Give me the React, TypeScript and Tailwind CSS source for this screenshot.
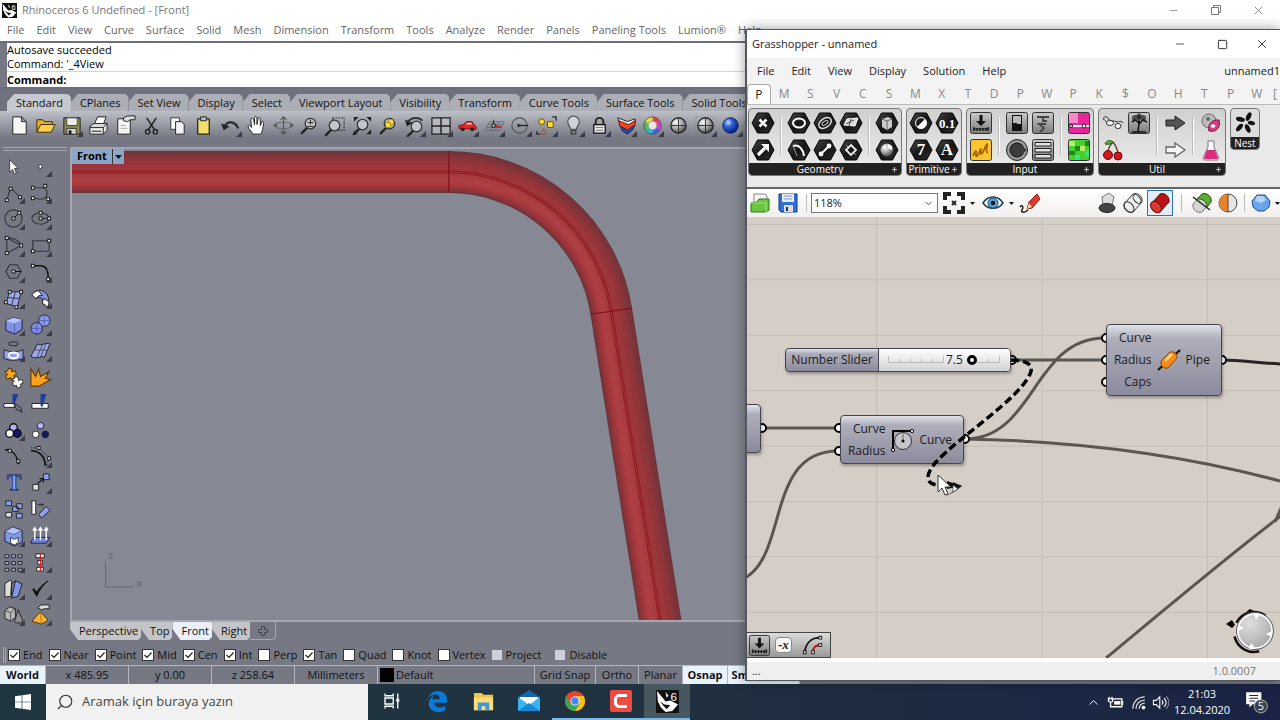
import { ReactNode } from 'react'
import clsx from 'clsx'
import { ChevronDown, ChevronUp, Minus, Plus, Search, Square, X } from 'lucide-react'

interface Tool {
  name: string
  art: ReactNode
  more?: boolean
}

interface IconProps {
  children: ReactNode
  size?: number
}

function Icon({ children, size = 24 }: IconProps) {
  return (
    <svg width={size} height={size} viewBox="0 0 24 24" fill="none" className="shrink-0" aria-hidden="true">
      {children}
    </svg>
  )
}

// Small square grip used on curve icons
function Dot({ x, y }: { x: number; y: number }) {
  return <rect x={x - 1.5} y={y - 1.5} width="3" height="3" fill="#fff" stroke="#111" strokeWidth="1" />
}

function Sphere() {
  return (
    <>
      <circle cx="12" cy="12" r="8" fill="url(#greyBall)" stroke="#1c1c1c" strokeWidth="1.2" />
      <path d="M12 4v16M4 12h16" stroke="#333" strokeWidth="1" />
    </>
  )
}

function Lens({ x = 13, y = 10 }: { x?: number; y?: number }) {
  return (
    <>
      <path d={`M${x - 4} ${y + 5}L${x - 9} ${y + 10}`} stroke="#222" strokeWidth="2.4" strokeLinecap="round" />
      <circle cx={x} cy={y} r="5.5" fill="#c3c5ca" stroke="#333" strokeWidth="1.3" />
    </>
  )
}

const standardTools: Tool[] = [
  { name: 'New', art: <path d="M5 3h9l5 5v13H5z M14 3v5h5" fill="#f6f6f6" stroke="#222" /> },
  {
    name: 'Open',
    art: (
      <>
        <path d="M3 19V6h6l2 2h8v3" fill="#e9b21d" stroke="#3a2b05" />
        <path d="M3 19l4-8h15l-4 8z" fill="#fccf4b" stroke="#3a2b05" />
      </>
    ),
  },
  {
    name: 'Save',
    more: true,
    art: (
      <>
        <path d="M4 4h17v17H4z" fill="#8c8a4d" stroke="#222" />
        <path d="M7 4h11v8H7z" fill="#eceded" stroke="#444" />
        <path d="M7 15h10v6H7z" fill="#d5d5cc" stroke="#333" />
        <path d="M9 17h3v4H9z" fill="#222" />
      </>
    ),
  },
  {
    name: 'Print',
    art: (
      <>
        <path d="M8 10l3-7h9l-3 8z" fill="#fff" stroke="#222" />
        <path d="M3 13l4-3h14v7l-4 4H3z" fill="#e2e2e2" stroke="#222" />
        <path d="M3 14h14l4-4M17 14v7M5 18h10" stroke="#222" />
      </>
    ),
  },
  {
    name: 'Properties',
    art: (
      <>
        <path d="M5 5h13v16H5z" fill="#f4f4f4" stroke="#222" />
        <path d="M8 12h5M8 15h7" stroke="#aaa" />
        <path d="M11 4l4-2h8v4h-5l-3 2-4-1z" fill="#ddd" stroke="#222" />
      </>
    ),
  },
  {
    name: 'Cut',
    art: (
      <>
        <path d="M7 4l8 12M17 4L9 16" stroke="#222" strokeWidth="1.6" />
        <circle cx="8" cy="18.500" r="2.300" stroke="#222" strokeWidth="1.4" />
        <circle cx="16" cy="18.500" r="2.300" stroke="#222" strokeWidth="1.4" />
      </>
    ),
  },
  {
    name: 'Copy',
    art: (
      <>
        <path d="M5 4h9v12H5z" fill="#fff" stroke="#333" />
        <path d="M10 8h6l3 3v10h-9z" fill="#f4f4f4" stroke="#222" />
      </>
    ),
  },
  {
    name: 'Paste',
    art: (
      <>
        <path d="M6 5h12v16H6z" fill="#f3dd6b" stroke="#222" strokeWidth="1.3" />
        <path d="M9 3h6v4H9z" fill="#bbb" stroke="#222" />
      </>
    ),
  },
  {
    name: 'Undo',
    more: true,
    art: (
      <>
        <path d="M6 13c3-6 11-6 14 2" stroke="#333" strokeWidth="2.6" />
        <path d="M2 10l3 7 6-4z" fill="#222" />
      </>
    ),
  },
  {
    name: 'Pan',
    art: (
      <path
        d="M8 21c-1-3-4-5-5-8 1-2 3 0 4 1L6 6c0-2 2-2 3 0l1 5V4c0-2 2-2 2.500 0v7l1-6c.5-2 2.500-1 2.500 0v7l1.500-4c1-1 2 0 2 1-1 6-1 9-3 12z"
        fill="#fff"
        stroke="#222"
      />
    ),
  },
  {
    name: 'Rotate view',
    art: (
      <>
        <ellipse cx="12" cy="12" rx="9" ry="3.500" stroke="#666" strokeWidth="1" />
        <path d="M12 3v18M9 6l3-3 3 3M9 18l3 3 3-3" stroke="#555" strokeWidth="1.2" />
        <path d="M1 12l4-3v5zM23 12l-4-3v5z" fill="#555" />
      </>
    ),
  },
  { name: 'Zoom', art: <><Lens /><path d="M10 9h6M13 6v5M10 13h6" stroke="#222" /></> },
  {
    name: 'Zoom window',
    art: <><path d="M9 4h12v13H9z" stroke="#333" strokeDasharray="1.500 1.500" strokeWidth="1.3" /><Lens x={11} y={12} /></>,
  },
  {
    name: 'Zoom extents',
    art: <><Lens x={12} y={11} /><path d="M3 8V3h5zM16 3h5v5zM21 16v5h-5zM3 21v-4l4 4z" fill="#222" /></>,
  },
  {
    name: 'Zoom selected',
    art: (
      <>
        <Lens />
        <circle cx="14.500" cy="8.500" r="3" fill="#fbe33a" stroke="#7d6b00" strokeWidth=".7" />
        <path d="M9 9h5v5H9z" fill="#fbe33a" stroke="#7d6b00" strokeWidth=".7" />
      </>
    ),
  },
  {
    name: 'Undo view',
    more: true,
    art: <><Lens x={13} y={13} /><path d="M4 8c4-5 12-5 15-1" stroke="#333" strokeWidth="2.200" /><path d="M1 6l2 7 6-4z" fill="#222" /></>,
  },
  {
    name: 'Four views',
    more: true,
    art: <><path d="M2 4h19v17H2z" fill="#c9cbd0" fillOpacity=".6" stroke="#222" strokeWidth="1.3" /><path d="M11.500 4v17M2 12.500h19" stroke="#222" strokeWidth="1.5" /></>,
  },
  {
    name: 'Set view',
    more: true,
    art: (
      <>
        <path d="M3 15v-3l5-1 3-3h6l2 4 2 1v3z" fill="#de2626" stroke="#8a1010" />
        <path d="M10 11l2-2h4l1 2z" fill="#f6d5d5" />
        <circle cx="7" cy="16" r="2" fill="#222" />
        <circle cx="17" cy="16" r="2" fill="#222" />
      </>
    ),
  },
  {
    name: 'Set CPlane',
    more: true,
    art: (
      <>
        <path d="M7 8h15l-4 9H2zM5 11h16M3.500 14h16M12 8l-4 9M17 8l-4 9" stroke="#666a73" strokeWidth=".9" />
        <path d="M11 12l8 2" stroke="#c00" strokeWidth="1.2" />
        <path d="M11 12V6" stroke="#333" />
        <Dot x={11} y={12} />
      </>
    ),
  },
  {
    name: 'Object snap',
    more: true,
    art: <><circle cx="11" cy="12" r="8" stroke="#555" strokeWidth="1.2" /><path d="M11 12h9" stroke="#222" strokeWidth="1.4" /><path d="M9 10v4l4-2z" fill="#222" /></>,
  },
  {
    name: 'Select',
    more: true,
    art: (
      <>
        <circle cx="7" cy="8" r="3" fill="#ffdc2c" stroke="#5e5000" />
        <path d="M13 8h6v6h-6z" fill="#ffdc2c" stroke="#5e5000" />
        <path d="M9 15l3 6H6z" stroke="#a05030" />
        <path d="M18 3h4v4M2 18v3h3" stroke="#222" strokeWidth="1.3" />
      </>
    ),
  },
  {
    name: 'Lights',
    more: true,
    art: (
      <>
        <path d="M9 16c0-3-3-4-3-8a6 6 0 0112 0c0 4-3 5-3 8z" fill="#d0d2d7" stroke="#444" strokeWidth="1.1" />
        <path d="M9.500 17h5v4h-5z" fill="#777" stroke="#333" />
      </>
    ),
  },
  {
    name: 'Lock',
    more: true,
    art: <><path d="M8 12V8a4 4 0 018 0v4" stroke="#222" strokeWidth="2" /><path d="M6 11h12v9H6z" fill="#e5e5e5" stroke="#111" strokeWidth="1.3" /><path d="M8 14h8M8 17h8" stroke="#777" /></>,
  },
  {
    name: 'Layers',
    more: true,
    art: (
      <>
        <path d="M3 4l10 4 8-3v4l-7 5-9-3z" fill="#fff" stroke="#222" />
        <path d="M4 7l10 4 7-4v5l-8 5-8-4z" fill="#f0441f" stroke="#7a1206" />
        <path d="M6 13l7 4 7-5-1 4-6 5-6-4z" fill="#2b4fa8" stroke="#13275c" />
      </>
    ),
  },
  {
    name: 'Color',
    more: true,
    art: (
      <g strokeWidth="4">
        <path d="M12 5a7 7 0 016 3.500" stroke="#e8403c" />
        <path d="M18 8.500a7 7 0 010 7" stroke="#e23ad0" />
        <path d="M18 15.500a7 7 0 01-6 3.500" stroke="#4a5be8" />
        <path d="M12 19a7 7 0 01-6-3.500" stroke="#27bcd6" />
        <path d="M6 15.500a7 7 0 010-7" stroke="#50c840" />
        <path d="M6 8.500a7 7 0 016-3.500" stroke="#eee03a" />
        <circle cx="12" cy="12" r="9" stroke="#444" strokeWidth=".8" />
        <circle cx="12" cy="12" r="4.500" fill="#e8e8ea" stroke="#777" strokeWidth=".6" />
      </g>
    ),
  },
  { name: 'Shade', art: <Sphere /> },
  { name: 'Render preview', more: true, art: <><path d="M2 3h19v18H2z" stroke="#777" strokeDasharray="1 2" /><Sphere /></> },
  {
    name: 'Render',
    more: true,
    art: <circle cx="11" cy="12" r="8" fill="url(#blueBall)" stroke="#0a1a5c" />,
  },
]

const line = { stroke: '#33363f', strokeWidth: 1.2 }

const sideTools: Tool[] = [
  { name: 'Select objects', art: <path d="M8 5v13l3-3 2 5 2-1-2-5h4z" fill="#fff" stroke="#222" strokeWidth=".8" /> },
  { name: 'Point', more: true, art: <circle cx="12" cy="12" r="2" fill="#fff" stroke="#222" /> },
  { name: 'Polyline', more: true, art: <><path d="M5 20l4-13 10 10" {...line} /><Dot x={5} y={20} /><Dot x={9} y={8} /><Dot x={19} y={17} /></> },
  { name: 'Curve', more: true, art: <><path d="M4 7h9c8 0 8 11 0 12l-8-1" {...line} /><Dot x={4} y={7} /><Dot x={17} y={5} /><Dot x={4} y={18} /><Dot x={20} y={19} /></> },
  { name: 'Circle', more: true, art: <><circle cx="12" cy="12" r="9" {...line} /><path d="M12 12l6-6" stroke="#111" /><Dot x={12} y={12} /><Dot x={18} y={6} /></> },
  { name: 'Ellipse', more: true, art: <><ellipse cx="12" cy="12" rx="9" ry="6" {...line} /><path d="M12 12h9" {...line} /><Dot x={12} y={6} /><Dot x={12} y={12} /><Dot x={21} y={12} /></> },
  { name: 'Arc', more: true, art: <><path d="M5 4l15 8L5 20zM5 4c7 0 13 3 15 8" {...line} /><Dot x={5} y={4} /><Dot x={20} y={12} /><Dot x={5} y={20} /></> },
  { name: 'Rectangle', more: true, art: <><path d="M4 7h17v11H4z" {...line} /><Dot x={21} y={7} /><Dot x={4} y={18} /></> },
  { name: 'Polygon', more: true, art: <><path d="M8 5h8l4 7-4 7H8l-4-7z" {...line} /><path d="M12 12h8" stroke="#111" /><Dot x={12} y={12} /></> },
  { name: 'Fillet curves', more: true, art: <><path d="M5 6h8c6 1 7 6 7 13" stroke="#111" strokeWidth="1.6" /><path d="M13 5h7v7" stroke="#777" /><Dot x={4} y={6} /><Dot x={20} y={20} /></> },
  { name: 'Surface from points', more: true, art: <><path d="M8 5h12l-4 16-12-4z" fill="#9aaae8" stroke="#223" /><path d="M14 5l-4 14M6 11l12 1" stroke="#334" /><Dot x={8} y={5} /><Dot x={20} y={5} /><Dot x={4} y={16} /><Dot x={15} y={21} /></> },
  { name: 'Sweep', more: true, art: <><path d="M3 8c4-5 9-6 13-3 5 3 5 9 4 16l-6-4c1-5-2-8-7-5z" fill="#7f90e2" stroke="#222" /><path d="M3 8c2-2 4-4 7-4l4 5c-3-1-5 1-7 3zM14 17l6 4 1-6-6-3z" fill="#fff" stroke="#222" /></> },
  { name: 'Box', more: true, art: <><path d="M4 8l8-3 9 2v10l-8 5-9-4z" fill="#7f90e6" stroke="#223" /><path d="M4 8l9 3 8-4-9-2z" fill="#b8c4fa" /><path d="M13 11v11" stroke="#5060b0" /></> },
  { name: 'Sphere', more: true, art: <><circle cx="16" cy="8" r="6" fill="#8b9bec" stroke="#223" /><path d="M16 2v12M10 8h12" stroke="#5666b4" /><circle cx="8" cy="16" r="6" fill="#7f90e6" stroke="#223" /><path d="M8 10v12M2 16h12" stroke="#5060b0" /></> },
  { name: 'Extrude', more: true, art: <><ellipse cx="12" cy="5" rx="5" ry="2" {...line} /><path d="M2 11c5 3 15 3 20 0v9c-5 3-15 3-20 0z" fill="#8fa2ee" stroke="#223" /><ellipse cx="12" cy="17" rx="5" ry="3" stroke="#fff" strokeWidth="2" /></> },
  { name: 'Patch', more: true, art: <><path d="M9 5c4 3 8-2 13 0l-6 14c-4-2-8 3-14-1z" fill="#9aaae8" stroke="#223" /><path d="M14 6L8 20M18 4l-6 15M6 11c4 2 8-1 13 1" stroke="#334" strokeWidth=".8" /></> },
  { name: 'Join', art: <><path d="M3 6l3-1 1-3 3 1v3l4-1 1 4-3 1 2 4-4 1-1-3-4 2-1-4 2-1z" fill="#f9a91c" stroke="#4d3000" /><path d="M10 13l3 0 1-2 3 1v3l4-1 1 4-3 1 1 3-4 1-1-3-3 1-1-4 2-1z" fill="#fff" stroke="#333" /></> },
  { name: 'Explode', art: <path d="M2 21V3l5 8 3-8 2 8 9-5-4 7 6 1-9 5-3 2z" fill="#f9a01c" stroke="#5c3600" strokeWidth="1.1" /> },
  { name: 'Trim', art: <><path d="M2 12h11v4H2z" fill="#fff" stroke="#222" /><path d="M12 12l3 6 6 3-1-4-5-4z" stroke="#222" /><path d="M11 2h6l-4 11-2-2z" fill="#1f3f98" /></> },
  { name: 'Split', art: <><path d="M3 12h17v5H3z" fill="#fff" stroke="#222" /><path d="M12 2h6l-4 14-2-2z" fill="#1f3f98" /></> },
  { name: 'Group', more: true, art: <><circle cx="12" cy="9" r="4" fill="#b3b5f4" stroke="#111" strokeWidth="1.5" /><circle cx="8" cy="15" r="4" fill="#fff" stroke="#111" strokeWidth="1.5" /><circle cx="16" cy="15" r="4" fill="#15156e" stroke="#111" strokeWidth="1.5" /></> },
  { name: 'Ungroup', art: <><circle cx="12" cy="7" r="3.500" fill="#b3b5f4" stroke="#222" /><circle cx="7" cy="16" r="3.500" fill="#fff" stroke="#222" /><circle cx="17" cy="16" r="3.500" fill="#15156e" stroke="#222" /></> },
  { name: 'Edit points', art: <><path d="M3 5c8 0 13 6 14 15" stroke="#111" strokeWidth="1.6" /><Dot x={8} y={6} /><Dot x={17} y={17} /></> },
  { name: 'Control points', more: true, art: <><path d="M2 6c9 0 15 6 15 16" stroke="#111" strokeWidth="1.8" /><path d="M2 3h8l11 10-2 8" stroke="#222" strokeDasharray="1.500 1.500" /><Dot x={10} y={3} /><Dot x={21} y={14} /></> },
  {
    name: 'Text',
    art: <text x="5" y="20" fontSize="23" fontWeight="700" fontFamily="Liberation Serif, serif" fill="#86a2f2" stroke="#16286e" strokeWidth=".8">T</text>,
  },
  { name: 'Move', more: true, art: <><path d="M4 14h6v6H4z" fill="#ddd" stroke="#222" /><path d="M15 3h6v6h-6z" fill="#8ea0ee" stroke="#222" /><path d="M9 13l5-4M11 8h4v4" stroke="#111" strokeWidth="1.3" /></> },
  { name: 'Blocks', art: <g stroke="#222"><path d="M4 3h6v5H4zM15 6h6v5h-6zM11 9h6v5h-6zM15 16h6v5h-6z" fill="#8ea0ee" /><path d="M4 15h6v5H4z" fill="#ddd" /></g> },
  { name: 'Rotate', art: <><path d="M3 3h4v14H3z" fill="#fff" stroke="#222" /><path d="M9 7h6l-2-2M15 7l-2 2" stroke="#222" /><path d="M10 17l8-8 4 4-9 8z" fill="#8ea0ee" stroke="#222" /></> },
  { name: 'Boolean', more: true, art: <><path d="M3 8l8-5 10 4v12l-8 4-10-5z" fill="#7f9bf0" stroke="#223" /><path d="M3 8l9 3 9-4-10-4z" fill="#b2c3fb" stroke="#334" strokeWidth=".6" /><path d="M9 14l4 2 4-2v5l-4 3-4-2z" fill="#fff" stroke="#333" /></> },
  { name: 'Direction', more: true, art: <><path d="M3 17l3-3h16l-4 6H2z" fill="#6c82de" stroke="#223" /><path d="M6 17V5M12 17V5M18 17V5M4 7l2-3 2 3M10 7l2-3 2 3M16 7l2-3 2 3" stroke="#fff" strokeWidth="1.5" /></> },
  {
    name: 'Array',
    more: true,
    art: <g fill="#a7b1e6" stroke="#222"><path d="M3 4h4v3H3zM10 4h4v3h-4zM17 4h4v3h-4zM3 11h4v3H3zM10 11h4v3h-4zM17 11h4v3h-4zM3 18h4v3H3zM10 18h4v3h-4zM17 18h4v3h-4z" /></g>,
  },
  { name: 'Align', more: true, art: <><path d="M7 3h9v4H7zM9 10h5v4H9zM8 17h7v4H8z" fill="#eee" stroke="#222" /><path d="M12 2v20" stroke="#e02020" strokeWidth="1.3" /></> },
  { name: 'Flow', more: true, art: <><path d="M3 7l6-4 1 2v15l-7 1z" fill="#ddd" stroke="#222" /><path d="M14 4l7 3-4 13-7 2z" fill="#8095ea" stroke="#222" /><path d="M14 4l-4 3-1 12" stroke="#222" /></> },
  { name: 'Check', more: true, art: <path d="M4 13l4 7C11 13 15 8 20 4 14 8 11 11 8 16l-3-4z" fill="#111" stroke="#111" /> },
  { name: 'Mesh', more: true, art: <><path d="M3 8l5-4 6 2v9l-5 4-6-3z" fill="#b8b8ba" stroke="#222" /><path d="M3 8l6 2 5-4M9 10v9" stroke="#555" /><path d="M17 7l5 12c-3 3-9 2-9 0z" fill="#8e8e92" stroke="#222" /></> },
  { name: 'Lumion', more: true, art: <><path d="M12 9l8 9-7 4-10-3z" fill="#f8b334" stroke="#4d3000" /><path d="M12 9l1 13" stroke="#b57812" /><path d="M9 5l4-3h8v4h-5l-3 1z" fill="#ddd" stroke="#222" /></> },
]

function ToolButton({ tool }: { tool: Tool }) {
  return (
    <button type="button" aria-label={tool.name} className="relative flex min-w-0 items-center justify-center">
      <Icon size={23}>{tool.art}</Icon>
      {tool.more && (
        <svg width="6" height="6" viewBox="0 0 6 6" className="absolute right-0.5 bottom-0.5" aria-hidden="true">
          <path d="M6 0v6H0z" fill="#3a3d48" />
        </svg>
      )}
    </button>
  )
}

function RhinoLogo({ size = 16 }: { size?: number }) {
  return (
    <Icon size={size}>
      <path d="M0 0h24v24H0z" fill="#111" />
      <path d="M1 1l5 6 4 5 5-1 8 4-6 7-7 1-5-5-3-6z" fill="#fff" />
      <path d="M4 12l5 3 6 1-4 4zM7 2l5 7-3 1z" fill="#111" />
      <path d="M10 2l3 4-2 2z" fill="#fff" />
      <text x="15" y="11" fontSize="12" fontFamily="Liberation Sans, sans-serif" fill="#fff">6</text>
    </Icon>
  )
}

const rhinoMenus = [
  'File', 'Edit', 'View', 'Curve', 'Surface', 'Solid', 'Mesh', 'Dimension', 'Transform', 'Tools',
  'Analyze', 'Render', 'Panels', 'Paneling Tools', 'Lumion®', 'Help',
]

const toolTabs = [
  'Standard', 'CPlanes', 'Set View', 'Display', 'Select', 'Viewport Layout', 'Visibility',
  'Transform', 'Curve Tools', 'Surface Tools', 'Solid Tools',
]

const snaps = [
  { name: 'End', on: true },
  { name: 'Near', on: true },
  { name: 'Point', on: true },
  { name: 'Mid', on: true },
  { name: 'Cen', on: true },
  { name: 'Int', on: true },
  { name: 'Perp', on: false },
  { name: 'Tan', on: true },
  { name: 'Quad', on: false },
  { name: 'Knot', on: false },
  { name: 'Vertex', on: false },
]

// Stacked strokes give the pipe its round shading
const pipeShades = [
  { shift: 0, width: 42, color: '#68343a' },
  { shift: 0, width: 40, color: '#78343a' },
  { shift: 1, width: 36, color: '#83343a' },
  { shift: 2, width: 32, color: '#8c353a' },
  { shift: 3, width: 28, color: '#94353a' },
  { shift: 4, width: 23, color: '#9c363b' },
  { shift: 6, width: 17, color: '#a2383d' },
  { shift: 7, width: 11, color: '#a83b40' },
  { shift: 8, width: 6, color: '#ad3e43' },
]

function pipePath(shift: number) {
  const r = 164 - shift
  const x = 448 + r * 0.988
  const y = 336 - r * 0.156
  return `M72 ${336 - r}H448A${r} ${r} 0 0 1 ${x} ${y}L${x + 55} ${y + 348}`
}

function Viewport() {
  return (
    <div className="relative min-h-0 flex-1 overflow-hidden border-2 border-r-0 border-[#a4a7b0] bg-[#868993]">
      <svg viewBox="72 149 1208 470" preserveAspectRatio="xMinYMin slice" className="absolute inset-0 h-full w-full" fill="none">
        <defs>
          <radialGradient id="greyBall" cx=".35" cy=".3" r=".8">
            <stop offset="0" stopColor="#fff" />
            <stop offset=".5" stopColor="#a5a5a5" />
            <stop offset="1" stopColor="#333" />
          </radialGradient>
          <radialGradient id="blueBall" cx=".35" cy=".3" r=".8">
            <stop offset="0" stopColor="#cfe0ff" />
            <stop offset=".35" stopColor="#2c62e0" />
            <stop offset="1" stopColor="#06146a" />
          </radialGradient>
          <linearGradient id="hexFill" x1="0" y1="0" x2="1" y2="1">
            <stop offset="0" stopColor="#4a4a4a" />
            <stop offset=".5" stopColor="#161616" />
            <stop offset="1" stopColor="#2c2c2c" />
          </linearGradient>
          <linearGradient id="steel" x1="0" y1="0" x2="0" y2="1">
            <stop offset="0" stopColor="#c9c9c9" />
            <stop offset="1" stopColor="#7b7b7b" />
          </linearGradient>
        </defs>
        {pipeShades.map((shade) => (
          <path key={shade.width} d={pipePath(shade.shift)} stroke={shade.color} strokeWidth={shade.width} />
        ))}
        <path d={pipePath(1)} stroke="#8f1820" strokeWidth="1" />
        <path d={pipePath(-1)} stroke="#8f1820" strokeWidth="1" />
        <path d="M448 151v42M589.500 314l41-6" stroke="#7c0e16" strokeWidth="1" />
        <path d="M105.500 560v26H133" stroke="#63666f" />
        <text x="108" y="558" fontSize="11" fontFamily="Open Sans, sans-serif" fill="#63666f">z</text>
        <text x="136" y="586" fontSize="11" fontFamily="Open Sans, sans-serif" fill="#63666f">x</text>
      </svg>
      <div className="absolute top-0 left-0 flex h-[15px] items-center bg-[#8ba6c9] text-black">
        <button type="button" className="px-[5px] font-bold">Front</button>
        <button type="button" aria-label="Viewport menu" className="flex h-full items-center border-l border-[#333] px-0.5">
          <svg width="7" height="4" viewBox="0 0 7 4" aria-hidden="true"><path d="M0 0h7L3.500 4z" fill="#111" /></svg>
        </button>
      </div>
    </div>
  )
}

function StatusCell({ children, className = '', active = false }: { children: ReactNode; className?: string; active?: boolean }) {
  return (
    <button
      type="button"
      className={clsx(
        'flex shrink-0 items-center justify-center border-r border-[#b4b7bf] whitespace-nowrap',
        active && 'bg-[#e9f3fc] font-bold',
        className
      )}
    >
      {children}
    </button>
  )
}

function RhinoWindow() {
  return (
    <section className="flex flex-1 flex-col overflow-hidden bg-[#767984]" aria-label="Rhinoceros">
      <header className="flex h-5 items-center justify-between bg-white pl-0.5 text-[#777]">
        <div className="flex items-center gap-[5px]">
          <RhinoLogo size={15} />
          <h1>Rhinoceros 6 Undefined - [Front]</h1>
        </div>
        <div className="flex items-center">
          <button type="button" aria-label="Minimize" className="flex w-[42px] justify-center"><Minus size={11} strokeWidth={1.5} /></button>
          <button type="button" aria-label="Restore" className="flex w-[43px] justify-center">
            <svg width="10" height="10" viewBox="0 0 10 10" fill="none" stroke="#777" aria-hidden="true"><path d="M.5 2.500h7v7h-7zM2.500 2.500v-2h7v7h-2" /></svg>
          </button>
          <button type="button" aria-label="Close" className="flex w-[43px] justify-center"><X size={13} strokeWidth={1.5} /></button>
        </div>
      </header>
      <nav className="flex h-[21px] items-center gap-3 bg-white pl-[7px] text-[#666]">
        {rhinoMenus.map((menu) => (
          <button key={menu} type="button" className="shrink-0">{menu}</button>
        ))}
      </nav>

      <div className="border-y-2 border-[#6c6f7b] pl-[7px]">
        <div className="bg-white leading-[14px] text-black">
          <div className="border-b border-[#d5d5d8]">
            <p>Autosave succeeded</p>
            <p>Command: '_4View</p>
          </div>
          <label className="flex h-[15px] items-center gap-1 font-bold">
            Command:
            <input type="text" className="h-3 w-96 outline-none" />
          </label>
        </div>
      </div>

      <div className="flex h-[22px] items-end bg-[#6f727e] pl-[7px] text-[#111]">
        {toolTabs.map((tab, i) => (
          <button
            key={tab}
            type="button"
            className={clsx(
              'h-[17px] shrink-0 pr-2 pl-[9px] leading-[17px] [clip-path:polygon(7px_0,calc(100%_-_3px)_0,100%_3px,100%_100%,0_100%,0_8px)]',
              i === 0 ? 'bg-[#c6c9d0]' : 'bg-[#acaeb6]'
            )}
          >
            {tab}
          </button>
        ))}
      </div>
      <div className="bg-linear-to-b from-[#bdc0c7] to-[#737681] pl-1.5">
        <div className="grid h-[28px] w-[58%] grid-cols-[repeat(28,minmax(0,1fr))]">
          {standardTools.map((tool) => (
            <ToolButton key={tool.name} tool={tool} />
          ))}
        </div>
      </div>

      <div className="flex min-h-0 flex-1 pt-2">
        <aside className="flex w-[70px] shrink-0 flex-col" aria-label="Main tools">
          <div className="mx-[3px] mb-0.5 h-1 border-y border-[#a4a7b0]" />
          <div className="grid w-[54px] flex-1 grid-cols-2 grid-rows-[repeat(18,minmax(24px,1fr))] pb-3.5">
            {sideTools.map((tool) => (
              <ToolButton key={tool.name} tool={tool} />
            ))}
          </div>
        </aside>
        <div className="flex min-w-0 flex-1 flex-col">
          <Viewport />
          <div className="flex h-5 items-start text-[#111]">
            {['Perspective', 'Top', 'Front', 'Right'].map((view) => (
              <button
                key={view}
                type="button"
                className={clsx(
                  'h-[18px] pr-[3px] pl-[9px] leading-[18px] [clip-path:polygon(0_0,100%_0,100%_calc(100%_-_3px),calc(100%_-_3px)_100%,8px_100%,0_7px)]',
                  view === 'Front' ? 'bg-[#eaf0f9]' : 'bg-[#c4c5c9]'
                )}
              >
                {view}
              </button>
            ))}
            <button type="button" aria-label="Add viewport" className="flex h-[18px] w-[26px] items-center justify-center rounded-br border-r border-b border-[#a4a7b0]">
              <svg width="10" height="10" viewBox="0 0 10 10" fill="none" stroke="#44464e" aria-hidden="true"><path d="M3.500.5h3v3h3v3h-3v3h-3v-3h-3v-3h3z" /></svg>
            </button>
          </div>
        </div>
      </div>

      <div className="mt-[3px] flex h-[20px] items-center gap-1.5 pl-[3px] text-[#111]">
        <span className="-mr-1 h-4 w-[3px] border-x border-[#a4a7b0]" />
        {snaps.map((snap) => (
          <label key={snap.name} className="relative flex shrink-0 items-center gap-[3px]">
            <input type="checkbox" defaultChecked={snap.on} className="peer h-3 w-3 appearance-none border border-[#333] bg-white" />
            <svg width="12" height="12" viewBox="0 0 12 12" fill="none" className="absolute left-0 hidden peer-checked:block" aria-hidden="true">
              <path d="M2.500 6l2.500 2.500L9.500 3.500" stroke="#222" strokeWidth="1.2" />
            </svg>
            {snap.name}
          </label>
        ))}
        {['Project', 'Disable'].map((name) => (
          <label key={name} className="mr-2 flex shrink-0 items-center gap-1">
            <input type="checkbox" className="h-2.5 w-2.5 appearance-none bg-[#ced1d9]" />
            {name}
          </label>
        ))}
      </div>
      <div className="flex h-[19px] border-t border-[#b4b7bf] text-[#111]">
        <StatusCell active className="w-[46px]">World</StatusCell>
        <StatusCell className="w-[83px]">x 485.95</StatusCell>
        <StatusCell className="w-[83px]">y 0.00</StatusCell>
        <StatusCell className="w-[83px]">z 258.64</StatusCell>
        <StatusCell className="w-[83px]">Millimeters</StatusCell>
        <button type="button" className="flex w-[157px] shrink-0 items-center gap-0.5 border-r border-[#b4b7bf] pl-0.5">
          <span className="h-[14px] w-[14px] bg-black" />
          Default
        </button>
        <StatusCell className="w-[61px]">Grid Snap</StatusCell>
        <StatusCell className="w-[43px]">Ortho</StatusCell>
        <StatusCell className="w-[44px]">Planar</StatusCell>
        <StatusCell active className="w-[45px]">Osnap</StatusCell>
        <StatusCell active className="w-[72px]">SmartTrack</StatusCell>
      </div>
    </section>
  )
}

function Hex({ name, children }: { name: string; children: ReactNode }) {
  return (
    <button type="button" aria-label={name} className="flex h-[27px] w-[26px] items-center justify-center">
      <Icon>
        <path d="M6.500 2h11L23 12l-5.500 10h-11L1 12z" fill="url(#hexFill)" stroke="#000" />
        {children}
      </Icon>
    </button>
  )
}

function Tile({ name, children }: { name: string; children?: ReactNode }) {
  return (
    <button type="button" aria-label={name} className="flex h-[27px] w-[26px] items-center justify-center">
      <Icon>{children}</Icon>
    </button>
  )
}

function HexLetter({ children, size = 15 }: { children: string; size?: number }) {
  return (
    <text x="12" y="17" textAnchor="middle" fontSize={size} fontWeight="700" fontFamily="Liberation Serif, serif" fill="#fff">
      {children}
    </text>
  )
}

function Frame({ fill = 'url(#steel)' }: { fill?: string }) {
  return <rect x="1.500" y="1.500" width="21" height="21" rx="2" fill={fill} stroke="#333" />
}

function ButtonArt() {
  return (
    <>
      <Frame />
      <path d="M12 5v6M4 18h16M5 20v-4M8 20v-3M11 20v-3M14 20v-3M17 20v-3M19 20v-4" stroke="#111" strokeWidth="1.200" />
      <path d="M10.500 4h3v6H17l-5 5-5-5h3.500z" fill="#111" />
    </>
  )
}

function Rule() {
  return <span className="mx-[4px] my-2 w-0.5 border-l border-[#bbb] bg-white" />
}

function RibbonGroup({ name, children }: { name: string; children: ReactNode }) {
  return (
    <div className="flex shrink-0 flex-col overflow-hidden rounded border border-[#777] bg-linear-to-b from-[#d0d0d0] to-[#eee]">
      <div className="flex h-[54px] px-px">{children}</div>
      <div className="flex h-3 items-center bg-[#222] text-[10px] text-white">
        <span className="flex-1 text-center">{name}</span>
        <button type="button" aria-label={`More ${name}`} className="w-2.5"><Plus size={7} strokeWidth={4} color="#bbb" /></button>
      </div>
    </div>
  )
}

function Ribbon() {
  return (
    <div className="flex h-[83px] items-start gap-1 overflow-hidden border-t border-[#bbb] bg-[#e9e9e9] pt-[3px] pl-px">
      <RibbonGroup name="Geometry">
        <div>
          <Hex name="Point"><path d="M8.500 8.500l7 7M15.500 8.500l-7 7" stroke="#fff" strokeWidth="2.600" /></Hex>
          <Hex name="Vector"><path d="M7 17l7-7" stroke="#fff" strokeWidth="3.200" /><path d="M10 6h8v8z" fill="#fff" /></Hex>
        </div>
        <Rule />
        <div>
          <Hex name="Circle"><ellipse cx="12" cy="12" rx="6" ry="4.500" stroke="#fff" strokeWidth="2" /></Hex>
          <Hex name="Circular arc"><path d="M6 8c6-2 10 3 11 10" stroke="#fff" strokeWidth="2" /><path d="M6 8l4 10" stroke="#999" /></Hex>
        </div>
        <div>
          <Hex name="Curve"><ellipse cx="12" cy="12" rx="7" ry="4.500" transform="rotate(-35 12 12)" stroke="#ddd" strokeWidth="1.400" /><ellipse cx="12" cy="12" rx="3.500" ry="1.700" transform="rotate(-35 12 12)" stroke="#ccc" /></Hex>
          <Hex name="Line"><path d="M8 16l8-8" stroke="#fff" strokeWidth="2" /><circle cx="8" cy="16" r="2.400" fill="#fff" /><circle cx="16" cy="8" r="2.400" fill="#fff" /></Hex>
        </div>
        <div>
          <Hex name="Plane"><path d="M5 14l3-6 11-1-3 8z" fill="#ddd" stroke="#fff" /><path d="M7 13l8-4M12 8l-2 7" stroke="#444" /></Hex>
          <Hex name="Rectangle"><path d="M12 7l5 5-5 5-5-5z" stroke="#eee" strokeWidth="1.800" /><path d="M7 7l2 2M15 15l2 2" stroke="#999" /></Hex>
        </div>
        <Rule />
        <div>
          <Hex name="Box"><path d="M7 8l6-2 4 2v8l-5 3-5-3z" fill="#ccc" /><path d="M7 8l5 2 5-2M12 10v9" stroke="#666" /></Hex>
          <Hex name="Brep"><circle cx="12" cy="12" r="6.500" fill="url(#greyBall)" /><path d="M13 6l4 2v4l-4-2z" fill="#fff" /></Hex>
        </div>
      </RibbonGroup>

      <RibbonGroup name="Primitive">
        <div>
          <Hex name="Boolean"><circle cx="12" cy="12" r="5.500" stroke="#fff" /><path d="M16 8a5.500 5.500 0 01-8 8z" fill="#fff" /></Hex>
          <Hex name="Integer"><HexLetter size={17}>7</HexLetter></Hex>
        </div>
        <div>
          <Hex name="Number"><HexLetter size={13}>0.1</HexLetter></Hex>
          <Hex name="Text"><HexLetter size={17}>A</HexLetter></Hex>
        </div>
      </RibbonGroup>

      <RibbonGroup name="Input">
        <div>
          <Tile name="Button"><ButtonArt /></Tile>
          <Tile name="Sketch"><Frame fill="#fcc52d" /><path d="M4 18c2-6 4-6 3-2s2 2 3-1 3-6 2-2 1 4 3-1 4-8 3-4-1 6 1 7" stroke="#a86200" strokeWidth="1.800" /></Tile>
        </div>
        <Rule />
        <div>
          <Tile name="Toggle"><Frame /><path d="M7 4h10v16H7z" fill="#111" /><path d="M12 5h4v8h-4zM8 5h8v7H8z" fill="#bbb" /></Tile>
          <Tile name="Knob"><circle cx="12" cy="12" r="10.500" fill="#999" stroke="#222" /><circle cx="12" cy="12" r="7" fill="#3c3c3c" stroke="#111" /><path d="M17 8l5 4-5 4z" fill="#3c3c3c" /></Tile>
        </div>
        <div>
          <Tile name="Graph"><Frame /><path d="M6 6h12M12 6v4h4M15 13H8l5 4-4 4" stroke="#444" strokeWidth="1.800" /></Tile>
          <Tile name="Value list"><Frame /><path d="M4 4.500h16v3.500H4zM4 10.500h16V14H4zM4 16.500h16V20H4z" fill="#e2e2e2" stroke="#222" /></Tile>
        </div>
        <Rule />
        <div>
          <Tile name="Gradient"><Frame fill="#e8259b" /><path d="M2 2h9v10H2z" fill="#f48bc8" /><path d="M2 15h20" stroke="#fff" strokeWidth="2" /><circle cx="4" cy="15" r="1.500" fill="#fff" stroke="#111" /><circle cx="17" cy="15" r="2" fill="#fff" stroke="#111" /></Tile>
          <Tile name="Image sampler"><Frame fill="#49cf2d" /><path d="M2 3h6v5H2zM13 8h5v5h-5z" fill="#b4f063" /><path d="M8 8h5v5H8zM18 3h4v5h-4zM2 13h6v4H2z" fill="#1b8a1c" /><path d="M8 17h5v5H8zM18 13h4v5h-4z" fill="#2ee68c" /></Tile>
        </div>
      </RibbonGroup>

      <RibbonGroup name="Util">
        <div>
          <Tile name="Glasses"><path d="M2 8c2-4 5-2 6 1l9 2c2-1 4-1 5 1M2 8c2 0 3 3 5 5" stroke="#333" /><ellipse cx="9" cy="12" rx="3.500" ry="2.500" fill="#fff" stroke="#333" /><ellipse cx="17" cy="15" rx="3" ry="2.500" fill="#fff" stroke="#333" /></Tile>
          <Tile name="Cherry picker"><path d="M7 15c0-5 3-9 5-11M17 17c0-5-2-9-5-13" stroke="#5b3a18" strokeWidth="1.300" /><path d="M12 4c-3-3-7-1-8 2 3 1 6 0 8-2z" fill="#5cab2d" stroke="#2c5c12" /><circle cx="7" cy="17" r="4.500" fill="#d5141c" stroke="#6e0509" /><circle cx="17" cy="18" r="4" fill="#d5141c" stroke="#6e0509" /></Tile>
        </div>
        <div>
          <Tile name="Data tree"><Frame /><path d="M11 21l1-9-5-4M12 13l5-5M12 12V5M8 9L5 11M16 9l4 2" stroke="#111" strokeWidth="1.600" /><circle cx="8" cy="7" r="3" fill="#222" fillOpacity=".7" /><circle cx="16" cy="7" r="3" fill="#222" fillOpacity=".7" /><circle cx="12" cy="5" r="2.500" fill="#222" fillOpacity=".8" /><path d="M5 21h14" stroke="#111" strokeWidth="1.500" /></Tile>
        </div>
        <Rule />
        <div>
          <Tile name="Data input"><path d="M3 9h9V5l10 7-10 7v-4H3z" fill="#555" stroke="#222" /></Tile>
          <Tile name="Data output"><path d="M3 9h9V5l10 7-10 7v-4H3z" fill="#f4f4f4" stroke="#666" strokeWidth="1.300" /></Tile>
        </div>
        <Rule />
        <div>
          <Tile name="Colour"><circle cx="10" cy="10" r="7" fill="#bbb" stroke="#666" /><circle cx="9" cy="8" r="2" fill="#666" /><path d="M10 20c-2-6 3-12 10-11 2 6-2 13-10 11z" fill="#d83a7f" stroke="#7c1240" /><ellipse cx="14" cy="15" rx="2.500" ry="1.800" fill="#fff" /></Tile>
          <Tile name="Flask"><path d="M9 3h6v6l5 11c0 1-1 2-2 2H6c-1 0-2-1-2-2L9 9z" fill="#fff" stroke="#777" /><path d="M8 12h8l3 8c0 1-1 1-2 1H7c-1 0-2 0-2-1z" fill="#dd2c7f" /></Tile>
        </div>
      </RibbonGroup>

      <button type="button" className="flex w-[30px] shrink-0 flex-col items-center overflow-hidden rounded border border-[#777] bg-[#ddd]">
        <span className="flex h-[28px] items-center">
          <Icon size={22}><g fill="#111"><ellipse cx="7" cy="8" rx="5" ry="2.500" transform="rotate(15 7 8)" /><ellipse cx="16" cy="5" rx="5" ry="2.500" transform="rotate(-65 16 5)" /><ellipse cx="6" cy="17" rx="5" ry="2.500" transform="rotate(-50 6 17)" /><ellipse cx="15" cy="18" rx="5" ry="2.500" transform="rotate(65 15 18)" /><ellipse cx="19" cy="12" rx="4" ry="2.200" transform="rotate(10 19 12)" /></g></Icon>
        </span>
        <span className="w-full bg-[#222] text-[10px] leading-[12px] text-white">Nest</span>
      </button>
    </div>
  )
}

function Caret() {
  return <svg width="5" height="3" viewBox="0 0 5 3" className="shrink-0" aria-hidden="true"><path d="M0 0h5L2.500 3z" fill="#111" /></svg>
}

function CanvasToolbar() {
  return (
    <div className="flex h-[30px] shrink-0 items-center justify-between overflow-hidden border-t-2 border-[#666] bg-linear-to-b from-white to-[#f2f0ee] pl-px">
      <div className="flex items-center gap-1">
        <button type="button" aria-label="Open"><Icon><path d="M6 3h11l2 2v9H6z" fill="#f4f4f4" stroke="#888" /><path d="M3 12l6-1 2-3h10v11l-3 2H3z" fill="#6cc43f" stroke="#2d7a16" /><path d="M3 12h15v9" stroke="#a5e07e" /></Icon></button>
        <button type="button" aria-label="Save"><Icon><path d="M3 3h18v18H5l-2-2z" fill="#2f6fd6" stroke="#123a86" /><path d="M6 3h12v8H6z" fill="#e5ecf7" /><path d="M8 5h8M8 8h8" stroke="#8a98b8" /><path d="M8 14h9v7H8z" fill="#dcdcdc" /><path d="M10 16h2v4h-2z" fill="#234" /></Icon></button>
        <span className="ml-0.5 h-[18px] border-l border-[#bbb]" />
        <span className="relative flex w-[127px] items-center">
          <select aria-label="Zoom" defaultValue="118%" className="h-[20px] w-full appearance-none border border-[#777] bg-white px-0.5 text-[11px] text-[#222]">
            <option>118%</option>
          </select>
          <ChevronDown size={11} color="#555" className="absolute right-1" />
        </span>
        <button type="button" aria-label="Zoom extents"><Icon><path d="M3 9V3h6M15 3h6v6M21 15v6h-6M9 21H3v-6" stroke="#222" strokeWidth="4" /><path d="M10 10l4 4M14 10l-4 4" stroke="#222" strokeWidth="1.800" /></Icon></button>
        <Caret />
        <button type="button" aria-label="Named views" className="ml-0.5"><Icon><path d="M2 12c5-8 15-8 20 0-5 7-15 7-20 0z" fill="#fff" stroke="#1a3c50" strokeWidth="1.500" /><circle cx="12" cy="12" r="5" fill="#55a3d8" stroke="#1c4b70" /><circle cx="12" cy="12" r="2.200" fill="#06121c" /></Icon></button>
        <Caret />
        <button type="button" aria-label="Sketch"><Icon><path d="M2 16c2-3 4 0 2 3s3 3 6 0" stroke="#222" strokeWidth="1.500" /><path d="M9 18l2-7 8-8 3 5-8 9z" fill="#e0382c" stroke="#8c1a12" /><path d="M9 18l2-6 3 4z" fill="#f2d3a4" /></Icon></button>
      </div>
      <div className="flex items-center gap-0.5">
        <button type="button" aria-label="No preview"><Icon><path d="M7 6l7-4 5 4-2 8-9 1z" fill="#ddd" stroke="#777" /><ellipse cx="12" cy="17" rx="8" ry="4.500" fill="#444" stroke="#222" /></Icon></button>
        <button type="button" aria-label="Wireframe preview"><Icon><path d="M3 13L12 3c5-2 10 3 9 8l-9 10c-5 2-10-3-9-8z" fill="#eee" stroke="#333" /><ellipse cx="8" cy="16" rx="4" ry="6" transform="rotate(-40 8 16)" stroke="#333" /><ellipse cx="16" cy="8" rx="3" ry="5" transform="rotate(-40 16 8)" stroke="#333" /></Icon></button>
        <button type="button" aria-label="Shaded preview" className="border border-[#2a74b0] bg-[#e4eef8]"><Icon><path d="M3 13L12 3c5-2 10 3 9 8l-9 10c-5 2-10-3-9-8z" fill="#b81616" stroke="#650808" /><ellipse cx="8" cy="16" rx="4.500" ry="6.500" transform="rotate(-40 8 16)" fill="#d93a32" stroke="#7a0c0c" /></Icon></button>
        <span className="mx-1.5 h-[18px] border-l border-[#bbb]" />
        <button type="button" aria-label="Only selected"><Icon><path d="M3 13L12 3c5-2 10 3 9 8l-9 10c-5 2-10-3-9-8z" fill="#d5d5d5" stroke="#777" /><path d="M7 8l5-5c5-2 10 3 9 8l-4 5c0-5-5-9-10-8z" fill="#5cae32" stroke="#22600c" /><path d="M3 6l17 13" stroke="#222" strokeWidth="1.500" /></Icon></button>
        <button type="button" aria-label="Preview settings"><Icon><circle cx="12" cy="12" r="9" fill="#e4e4e4" stroke="#444" /><path d="M12 3a9 9 0 000 18z" fill="#e8822a" /><path d="M12 3v18" stroke="#444" /></Icon></button>
        <span className="mx-0.5 h-[18px] border-l border-[#bbb]" />
        <button type="button" aria-label="Mesh quality"><Icon><path d="M8 4h8l5 6-1 6-5 4H9l-5-4-1-6z" fill="#6aa5ea" stroke="#1d4c9a" /><path d="M8 5h6l3 4-5 3-6-2z" fill="#b5d5f8" /></Icon></button>
        <Caret />
      </div>
    </div>
  )
}

interface Point {
  x: number
  y: number
}

const ports: Point[] = [
  { x: 15, y: 211 }, { x: 92, y: 211 }, { x: 92, y: 234 }, { x: 218, y: 222 }, { x: 265, y: 143 },
  { x: 359, y: 121 }, { x: 359, y: 143 }, { x: 359, y: 165 }, { x: 475, y: 143 },
]

const nodeClass =
  'absolute rounded border border-[#44444e] bg-linear-to-b from-[#e2e2ea] via-[#aeaebb] via-20% to-[#8b8b9c] text-[12px] text-[#1c1c22] shadow-[1px_2px_3px_rgba(0,0,0,0.3)]'

function Canvas() {
  return (
    <div className="relative min-h-0 flex-1 overflow-hidden bg-[#d5cec7]">
      <svg width="1600" height="1000" viewBox="0 0 1600 1000" className="absolute top-0 left-0" fill="none" aria-hidden="true">
        <defs>
          <pattern id="grid" width="165.500" height="55.400" x="129" y="7" patternUnits="userSpaceOnUse">
            <path d="M.5 56V.5H166" stroke="#c2bcb5" />
          </pattern>
        </defs>
        <rect width="1600" height="1000" fill="url(#grid)" />
        <g stroke="#5b5550" strokeWidth="3">
          <path d="M15 211h76" />
          <path d="M-4 362C42 340 18 234 91 234" />
          <path d="M265 143h93" />
          <path d="M218 222c70 0 68-101 140-101" />
          <path d="M218 222c120 2 226 18 315 42" />
          <path d="M359 441C430 382 492 330 534 299" />
          <path d="M528 305l6-14" />
        </g>
        <path d="M476 143c20 0 32 3 60 4" stroke="#2a2224" strokeWidth="3" />
        {ports.map((port) => (
          <circle key={`${port.x}-${port.y}`} cx={port.x} cy={port.y} r="4" fill="#fff" stroke="#000" strokeWidth="2" />
        ))}
      </svg>

      <div className={`${nodeClass} top-[187px] -left-4 h-[49px] w-[30px]`} />
      <div className={`${nodeClass} top-[131px] left-[38px] flex h-[24px] w-[226px] items-center overflow-hidden`}>
        <span className="w-[92px] text-center">Number Slider</span>
        <div className="relative flex h-full flex-1 items-center justify-center border-l border-[#44444e] bg-linear-to-b from-white to-[#d2d2d2]">
          <svg width="112" height="8" viewBox="0 0 112 8" fill="none" stroke="#b9b9b9" aria-hidden="true">
            <path d="M.5 0v6.500h55V0M89 6.500h22.500V0M11.500 3v3M22.500 3v3M33.500 3v3M44.500 3v3M100.500 3v3" />
          </svg>
          <label className="absolute left-[67px] flex items-center gap-1">
            7.5
            <input type="range" min="0" max="10" step="0.1" defaultValue="7.5" aria-label="Number Slider" className="h-2.5 w-2.5 appearance-none rounded-full border-[3px] border-black bg-white [&::-webkit-slider-thumb]:appearance-none" />
          </label>
        </div>
      </div>

      <div className={`${nodeClass} top-[198px] left-[93px] flex h-[49px] w-[124px] items-center justify-between px-[7px]`}>
        <div className="text-right leading-[22px]">
          <p>Curve</p>
          <p>Radius</p>
        </div>
        <Icon>
          <circle cx="13" cy="13" r="8.500" fill="#c5c5cc" stroke="#333" />
          <path d="M3 22V3h20" stroke="#000" strokeWidth="2" />
          <path d="M13 13V6" stroke="#666" />
          <circle cx="13" cy="13" r="1.500" fill="#000" />
          <circle cx="3" cy="22" r="1.600" fill="#fff" stroke="#000" />
          <circle cx="22" cy="3" r="1.600" fill="#fff" stroke="#000" />
        </Icon>
        <p className="pr-1">Curve</p>
      </div>

      <div className={`${nodeClass} top-[107px] left-[359px] flex h-[72px] w-[116px] items-center justify-between px-[7px]`}>
        <div className="text-right leading-[22px]">
          <p>Curve</p>
          <p>Radius</p>
          <p>Caps</p>
        </div>
        <Icon>
          <path d="M1 22L23 2" stroke="#111" strokeWidth="2.200" />
          <path d="M4 13l9-9c4-1 7 2 7 6l-9 10c-4 1-8-2-7-7z" fill="#f58a14" stroke="#8a4300" />
          <path d="M8 13l7-7" stroke="#ffd08a" strokeWidth="2.500" />
        </Icon>
        <p className="pr-1">Pipe</p>
      </div>

      <svg width="300" height="160" viewBox="0 0 300 160" className="absolute top-[130px] left-[170px]" fill="none" aria-hidden="true">
        <path d="M94 13c14 0 24 4 19 14-12 26-70 62-94 88-12 14-10 22 2 23l14 1" stroke="#000" strokeWidth="3.500" strokeDasharray="8 4" />
        <path d="M28 150l10-7-2-8 9 4-5 4z" fill="#222" />
        <path d="M30 134l15 5-15 3z" fill="#111" />
        <path d="M21 128v17l4-4 3 7 3-1-3-7h6z" fill="#fff" stroke="#333" />
        <path d="M36 138l5 4-5 3z" fill="#fff" stroke="#333" strokeWidth=".7" />
      </svg>

      <div className="absolute bottom-0 left-0 flex h-[26px] w-[84px] items-center gap-1 border-y border-r border-[#444] bg-linear-to-b from-[#dcdcdc] to-[#9a9a9a] pl-px">
        <button type="button" aria-label="Button"><Icon size={23}><ButtonArt /></Icon></button>
        <button type="button" className="rounded-sm border border-[#888] bg-[#f5f5f5] px-0.5 font-['Liberation_Serif',serif] text-[13px] leading-[14px] font-bold italic">-x</button>
        <button type="button" aria-label="Curve tool" className="ml-1.5"><Icon size={22}><path d="M3 20C4 10 10 4 20 4" stroke="#111" strokeWidth="2" /><path d="M12 20c0-5 3-8 8-8" stroke="#b01818" strokeWidth="2" /><Dot x={3} y={20} /><Dot x={20} y={4} /><Dot x={12} y={20} /><Dot x={20} y={12} /></Icon></button>
      </div>

      <svg width="54" height="50" viewBox="0 0 54 50" className="absolute right-0 bottom-0" fill="none" aria-hidden="true">
        <circle cx="28" cy="24" r="20" stroke="#111" strokeWidth="2.500" strokeDasharray="32 14 34 46" transform="rotate(75 28 24)" />
        <path d="M0 16l6-4 3 5-3 3zM20 4l4-3 4 2z" fill="#000" />
        <circle cx="29" cy="23" r="18.500" fill="url(#greyBall)" />
        <circle cx="29" cy="23" r="18.500" fill="#d0d0d0" fillOpacity=".7" stroke="#666" />
        <circle cx="29" cy="23" r="17" stroke="#fff" strokeWidth="1.500" />
        <path d="M30 12l-2-6h6zM18 20l-6-3v6zM40 26l6-3v6zM25 35l5 6h-7z" fill="#fff" />
      </svg>
    </div>
  )
}

function GrasshopperWindow() {
  return (
    <section
      aria-label="Grasshopper"
      className="absolute top-[29px] right-0 bottom-[3px] left-[58.2%] flex flex-col overflow-hidden border-y border-l-2 border-[#55575f] bg-[#f3f3f3] text-[#222] shadow-[0_0_12px_rgba(0,0,0,0.4)]"
    >
      <header className="flex h-[28px] shrink-0 items-center justify-between bg-white pl-[5px]">
        <h2>Grasshopper - unnamed</h2>
        <div className="flex items-center">
          <button type="button" aria-label="Minimize" className="flex w-[42px] justify-center"><Minus size={12} strokeWidth={1.5} /></button>
          <button type="button" aria-label="Maximize" className="flex w-[43px] justify-center"><Square size={11} strokeWidth={2} /></button>
          <button type="button" aria-label="Close" className="flex w-[36px] justify-center"><X size={14} strokeWidth={1.5} /></button>
        </div>
      </header>
      <nav className="flex h-[26px] shrink-0 items-center gap-[17px] pl-[10px]">
        {['File', 'Edit', 'View', 'Display', 'Solution', 'Help'].map((menu) => (
          <button key={menu} type="button">{menu}</button>
        ))}
        <button type="button" className="ml-auto">unnamed1</button>
      </nav>
      <div className="flex h-[20px] shrink-0 items-stretch overflow-hidden text-[12px] text-[#888]" role="tablist">
        {'PMSVCSMXTDPWPK$OHTPW['.split('').map((letter, i) => (
          <button
            key={i}
            type="button"
            role="tab"
            aria-selected={i === 0}
            className={clsx(
              i === 0
                ? 'w-[24px] shrink-0 rounded-t border border-b-0 border-[#aaa] bg-white text-[#222]'
                : i === 20 ? 'w-2.5 shrink-0' : 'flex-1'
            )}
          >
            {letter}
          </button>
        ))}
      </div>
      <Ribbon />
      <CanvasToolbar />
      <Canvas />
      <footer className="flex h-[22px] shrink-0 items-center justify-between border-t-4 border-white bg-[#efefef] pr-6 pl-[5px]">
        <span>...</span>
        <span className="text-[#777]">1.0.0007</span>
      </footer>
    </section>
  )
}

function TaskButton({ name, children, open = false, active = false }: { name: string; children: ReactNode; open?: boolean; active?: boolean }) {
  return (
    <button
      type="button"
      aria-label={name}
      className={clsx(
        'flex w-[46px] shrink-0 items-center justify-center border-b-2',
        active && 'bg-[#46575f]',
        open || active ? 'border-[#76b9ed]' : 'border-transparent'
      )}
    >
      {children}
    </button>
  )
}

function Taskbar() {
  return (
    <footer className="flex h-9 shrink-0 bg-linear-to-r from-[#1f3640] via-[#20313f] to-[#1a2345] text-white">
      <button type="button" aria-label="Start" className="flex w-[46px] items-center justify-center">
        <Icon size={16}><path d="M0 3.500l10-1.500v9.500H0zM11 1.800L24 0v11.500H11zM0 12.500h10V22L0 20.500zM11 12.500h13V24l-13-1.800z" fill="#fff" /></Icon>
      </button>
      <label className="flex w-[322px] items-center gap-2 bg-[#f1f1f1] pl-[10px] text-[#333]">
        <Search size={18} strokeWidth={1.5} className="shrink-0 -scale-x-100" />
        <input type="text" aria-label="Arama" placeholder="Aramak için buraya yazın" className="w-full bg-transparent text-[13px] outline-none placeholder:text-[#444]" />
      </label>
      <TaskButton name="Task view">
        <Icon size={18}><path d="M4 2v3h11V2M4 8h11v8H4zM4 22v-3h11v3M21 2v20" stroke="#fff" strokeWidth="1.800" /><path d="M19 9h4v4h-4z" fill="#fff" /></Icon>
      </TaskButton>
      <TaskButton name="Edge">
        <Icon size={22}><path d="M2 11C3 4 8 1 13 1c6 0 10 4 10 10v3H9c0 4 3 5 6 5 3 0 5-1 6-2v5c-2 1-4 2-8 2-6 0-10-4-10-9 0-4 2-7 6-9-2 2-2 4-2 4h8c0-3-1-5-4-5-4 0-7 2-11 6z" fill="#0a7bdc" /></Icon>
      </TaskButton>
      <TaskButton name="Explorer">
        <Icon size={23}><path d="M2 3h8l2 2h10v16H2z" fill="#f3c544" /><path d="M2 8h20v13H2z" fill="#fbdc7e" /><path d="M6 13h12v8h-4v-4h-4v4H6z" fill="#3d98d4" /></Icon>
      </TaskButton>
      <TaskButton name="Mail">
        <Icon size={24}><path d="M1 8l11-7 11 7v14H1z" fill="#1464ad" /><path d="M3 8h18v8H3z" fill="#fff" /><path d="M1 8l11 8 11-8v14H1z" fill="#37b3ef" /><path d="M1 22l11-8 11 8z" fill="#1787d6" /></Icon>
      </TaskButton>
      <TaskButton name="Chrome" open>
        <Icon size={22}>
          <circle cx="12" cy="12" r="11" fill="#ea4335" />
          <path d="M2.500 6.500A11 11 0 0012 23l5-8H7z" fill="#34a853" />
          <path d="M12 23a11 11 0 009.500-16.500H12l5 8.500z" fill="#fbc116" />
          <circle cx="12" cy="12" r="5" fill="#fff" />
          <circle cx="12" cy="12" r="4" fill="#4285f4" />
        </Icon>
      </TaskButton>
      <TaskButton name="Camtasia" open>
        <Icon size={24}><rect x="1" y="1" width="22" height="22" rx="2" fill="#ee4a41" /><path d="M18 6.500H9L6.500 9v6L9 17.500h9" stroke="#fff" strokeWidth="3" /></Icon>
      </TaskButton>
      <TaskButton name="Rhinoceros" active><RhinoLogo size={23} /></TaskButton>

      <div className="ml-auto flex items-center">
        <button type="button" aria-label="Hidden icons" className="flex w-[22px] justify-center"><ChevronUp size={15} strokeWidth={1.5} /></button>
        <button type="button" aria-label="Battery" className="flex w-[23px] justify-center">
          <Icon size={17}><path d="M8 7h13v11H5v-4M22 10v5M3 4v3M7 4v3M2 7h6v3c0 2-5 2-6 0zM5 12v4" stroke="#fff" strokeWidth="1.800" /><path d="M10 10h9v5h-9z" fill="#fff" /></Icon>
        </button>
        <button type="button" aria-label="Wifi" className="flex w-[23px] justify-center">
          <Icon size={15}><path d="M3 22C3 11 11 3 22 3M8 22C8 14 14 8 22 8M13 22c0-5 4-9 9-9" stroke="#ddd" strokeWidth="2" /><circle cx="20" cy="20" r="3" fill="#fff" /></Icon>
        </button>
        <button type="button" aria-label="Volume" className="flex w-[20px] justify-center">
          <Icon size={17}><path d="M2 9h4l5-5v16l-5-5H2z" stroke="#fff" strokeWidth="1.500" /><path d="M14 9c2 2 2 4 0 6M17 6c4 4 4 8 0 12" stroke="#fff" strokeWidth="1.500" /><path d="M20 3c5 6 5 12 0 18" stroke="#889" strokeWidth="1.500" /></Icon>
        </button>
        <button type="button" className="w-[64px] text-center leading-[16px]">21:03<br />12.04.2020</button>
        <button type="button" aria-label="Notifications" className="flex w-[46px] justify-center">
          <Icon size={26}>
            <path d="M2 3h14v11H8l-3 3v-3H2z" fill="#fff" />
            <path d="M5 6h8M5 8.500h8M5 11h5" stroke="#1a2345" />
            <circle cx="15.500" cy="16" r="6" fill="#3a3f4c" stroke="#999" />
            <text x="15.500" y="19.500" textAnchor="middle" fontSize="10" fontFamily="Open Sans, sans-serif" fill="#fff">5</text>
          </Icon>
        </button>
      </div>
    </footer>
  )
}

export default function App() {
  return (
    <main className="flex min-h-screen flex-col overflow-hidden font-['Open_Sans','Noto_Sans',sans-serif] text-[11px]">
      <div className="relative flex flex-1 flex-col">
        <RhinoWindow />
        <GrasshopperWindow />
      </div>
      <Taskbar />
    </main>
  )
}
